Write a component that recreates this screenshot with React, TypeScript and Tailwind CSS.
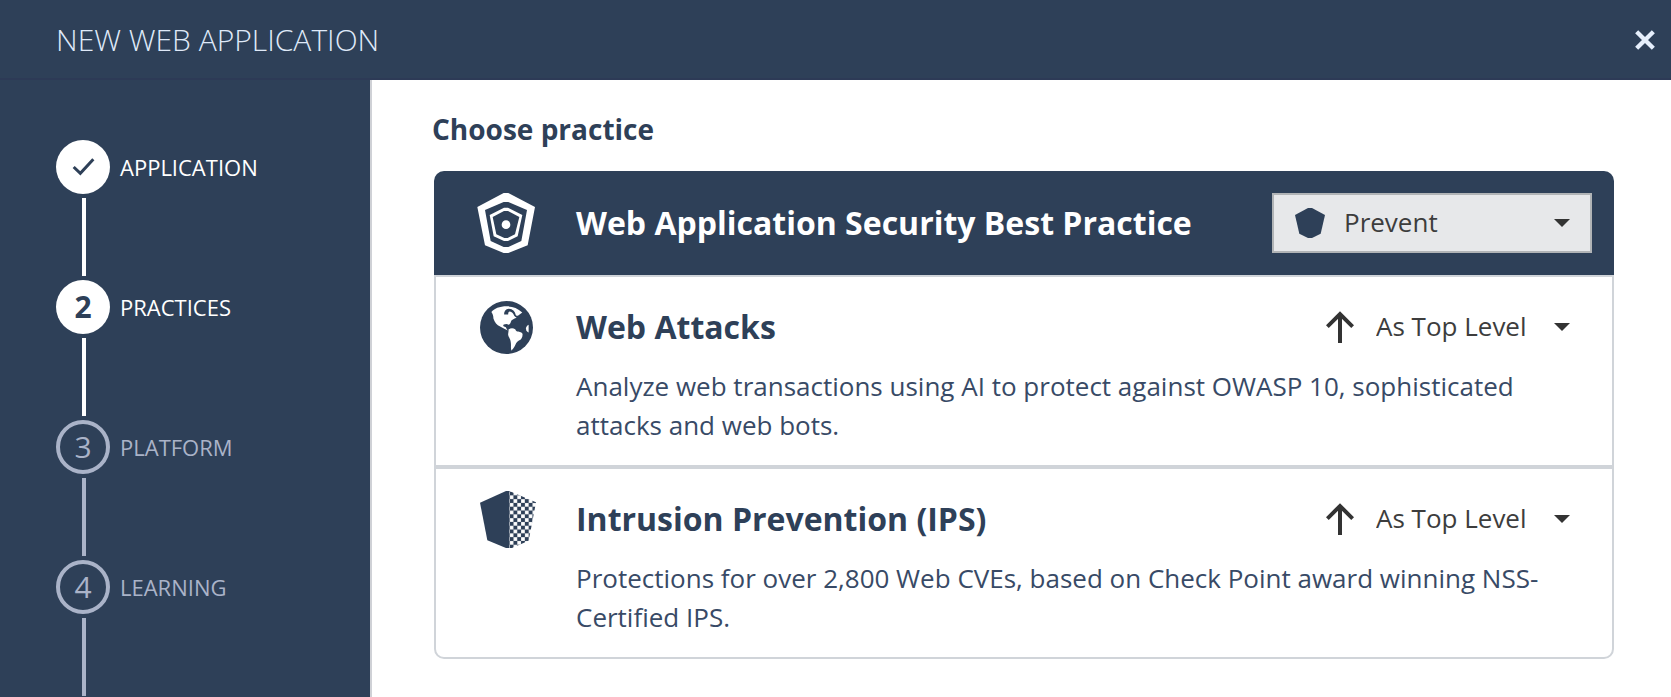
import { useState } from "react";
import type { ReactNode } from "react";

type StepState = "done" | "current" | "upcoming";

const steps: { label: string; state: StepState }[] = [
  { label: "APPLICATION", state: "done" },
  { label: "PRACTICES", state: "current" },
  { label: "PLATFORM", state: "upcoming" },
  { label: "LEARNING", state: "upcoming" },
];

function CheckIcon() {
  return (
    <svg className="h-5 w-6" viewBox="0 0 72 60" fill="none" stroke="currentColor" strokeWidth="9" aria-hidden="true">
      <path d="M8 33 L28 52 L67 10" />
    </svg>
  );
}

function CloseIcon() {
  return (
    <svg className="size-5" viewBox="0 0 60 60" fill="none" stroke="currentColor" strokeWidth="13" aria-hidden="true">
      <path d="M5 5 L55 55 M55 5 L5 55" />
    </svg>
  );
}

function TargetShieldIcon() {
  return (
    <svg className="h-[60px] w-[58px]" viewBox="0 0 174 180" fill="currentColor" aria-hidden="true">
      <path
        fillRule="evenodd"
        d="M80 0 H94 L174 42 L152 157 L94 180 H80 L24 157 L1 42 Z M80 27 L24 51 L41 144 L80 162 H94 L133 144 L150 51 L94 27 Z"
      />
      <path
        fillRule="evenodd"
        d="M81 44 H93 L136 66 L122 130 L93 144 H81 L50 130 L38 66 Z M81 54 L47 72 L58 124 L82 135 H92 L114 124 L127 72 L93 54 Z"
      />
      <circle cx="87" cy="95" r="13" />
    </svg>
  );
}

function GlobeIcon() {
  return (
    <svg className="size-[53px]" viewBox="0 0 158 158" aria-hidden="true">
      <circle cx="79" cy="79" r="79" fill="#2e4058" />
      <path
        fill="#fff"
        d="M34 33 C42 23 58 16 80 16 C98 16 112 21 126 34 L114 43 C111 45 108 45 106 40 C104 31 98 24 86 23 C76 24 72 31 72 40 L84 40 C84 34 85 31 89 31 C95 32 99 36 102 44 C105 47 107 48 109 50 C101 54 94 55 92 62 C91 67 88 70 85 71 C81 67 76 68 71 70 C67 74 70 77 77 78 C79 82 81 86 83 88 C75 84 67 80 60 76 C50 71 44 64 40 52 C40 45 38 39 34 33 Z"
      />
      <path
        fill="#fff"
        d="M85 85 C92 80 98 80 105 84 C107 88 109 91 114 91 C121 93 127 94 127 99 C127 109 123 115 116 118 C108 122 107 128 103 136 C100 142 96 145 94 148 C91 143 93 134 92 125 C91 112 86 109 84 101 C83 96 86 91 85 85 Z"
      />
      <path fill="#fff" d="M145 71 C138 75 135 81 138 87 C140 91 143 93 145 94 Z" />
    </svg>
  );
}

function HalfShieldIcon() {
  return (
    <svg className="h-[57px] w-14" viewBox="0 0 168 171" fill="#2e4058" aria-hidden="true">
      <defs>
        <pattern id="checker" x="89" y="13" width="22.8" height="22.8" patternUnits="userSpaceOnUse">
          <rect width="22.8" height="22.8" fill="#2e4058" />
          <rect x="0.2" y="0.2" width="11" height="11" fill="#fff" />
          <rect x="11.6" y="11.6" width="11" height="11" fill="#fff" />
        </pattern>
      </defs>
      <path d="M89 0 H78 L0 35 L22 148 L78 171 H89 Z" />
      <path d="M88 0 L168 34 L146 149 L96 171 H88 Z" fill="url(#checker)" />
    </svg>
  );
}

function ShieldIcon() {
  return (
    <svg className="size-[30px]" viewBox="0 0 90 90" fill="#2e4058" aria-hidden="true">
      <path d="M39 0 H51 L90 21 L77 77 L51 90 H39 L13 77 L0 21 Z" />
    </svg>
  );
}

function ArrowUpIcon() {
  return (
    <svg className="h-8 w-7" viewBox="0 0 84 96" fill="none" stroke="#333" strokeWidth="12" aria-hidden="true">
      <path d="M42 96 V8 M4 47 L42 9 L80 47" />
    </svg>
  );
}

function ModeSelect({
  label,
  icon,
  value,
  options,
  boxed = false,
}: {
  label: string;
  icon: ReactNode;
  value: string;
  options: string[];
  boxed?: boolean;
}) {
  const [mode, setMode] = useState(value);
  return (
    <div className={boxed ? "relative w-80 shrink-0" : "relative w-72 shrink-0"}>
      <select
        aria-label={label}
        value={mode}
        onChange={(event) => setMode(event.target.value)}
        className={
          boxed
            ? "h-15 w-full appearance-none border-2 border-[#b1b4b6] bg-[#e7e8ea] pr-12 pb-[2px] pl-[70px] text-[26px] text-[#3d3d3d]"
            : "h-15 w-full appearance-none border-2 border-transparent bg-transparent pr-12 pb-[2px] pl-[70px] text-[26px] text-[#3d3d3d]"
        }
      >
        {options.map((option) => (
          <option key={option}>{option}</option>
        ))}
      </select>
      <span className={boxed ? "pointer-events-none absolute inset-y-0 left-[23px] flex items-center" : "pointer-events-none absolute inset-y-0 left-[22px] flex items-center"}>
        {icon}
      </span>
      <span className="pointer-events-none absolute inset-y-0 right-[22px] flex items-center">
        <svg className="h-2 w-4" viewBox="0 0 16 8" fill="#333" aria-hidden="true">
          <path d="M0 0 H16 L8 8 Z" />
        </svg>
      </span>
    </div>
  );
}

function Practice({ icon, title, children }: { icon: ReactNode; title: string; children: ReactNode }) {
  return (
    <section className="border-2 border-[#d0d4d9] py-5 pr-5 last:rounded-b-[10px]">
      <div className="flex items-center">
        <div className="w-[140px] shrink-0 pl-11">{icon}</div>
        <h3 className="flex-1 text-[32px] leading-10 font-bold">{title}</h3>
        <ModeSelect
          label={`${title} mode`}
          icon={<ArrowUpIcon />}
          value="As Top Level"
          options={["As Top Level", "Prevent", "Detect", "Disabled"]}
        />
      </div>
      <p className="mt-[10px] pr-[50px] pl-[140px] text-[26px] leading-[39px] text-[#384a66]">{children}</p>
    </section>
  );
}

export default function App() {
  return (
    <div className="flex h-screen flex-col overflow-hidden bg-white font-['Open_Sans',sans-serif] text-[#2e4058]">
      <header className="flex h-20 shrink-0 items-center justify-between border-b-2 border-[#2d3a56] bg-[#2e4058] pt-[2px] pr-4 pl-14 text-[#dfe9f8]">
        <h1 className="text-[30px] leading-10 font-light">NEW WEB APPLICATION</h1>
        <button type="button" aria-label="Close" className="text-[#e6effc]">
          <CloseIcon />
        </button>
      </header>
      <div className="flex min-h-0 flex-1">
        <nav aria-label="Steps" className="w-[372px] shrink-0 overflow-hidden border-r-2 border-[#cfd1d6] bg-[#2e4058] pt-15 pl-14">
          <ol>
            {steps.map((step, index) => {
              const upcoming = step.state === "upcoming";
              return (
                <li key={step.label} className={upcoming ? "text-[#aab3c8]" : "text-white"}>
                  <a href={`#step-${index + 1}`} className="flex items-center gap-[10px]">
                    <span
                      className={
                        upcoming
                          ? "flex size-[54px] items-center justify-center rounded-full border-4 border-[#aab3c8] pb-[2px] text-[30px]"
                          : "flex size-[54px] items-center justify-center rounded-full bg-white pb-[2px] text-[30px] font-bold text-[#2e4058]"
                      }
                    >
                      {step.state === "done" ? <CheckIcon /> : index + 1}
                    </span>
                    <span className="text-[22px]">{step.label}</span>
                  </a>
                  <div className="my-1 ml-[26px] h-[78px] w-1 bg-current" />
                </li>
              );
            })}
          </ol>
        </nav>
        <main className="min-w-0 flex-1 overflow-hidden pt-[29px] pr-[57px] pl-[60px]">
          <h2 className="text-[28px] leading-10 font-bold">Choose practice</h2>
          <div className="mt-[22px] ml-[2px]">
            <div className="flex h-26 items-center rounded-t-[10px] bg-[#2e4058] pr-[22px] text-white">
              <div className="w-[142px] shrink-0 pl-[43px]">
                <TargetShieldIcon />
              </div>
              <h3 className="flex-1 text-[32px] leading-10 font-bold">Web Application Security Best Practice</h3>
              <ModeSelect
                label="Best practice mode"
                icon={<ShieldIcon />}
                value="Prevent"
                options={["Prevent", "Detect", "Disabled"]}
                boxed
              />
            </div>
            <Practice icon={<GlobeIcon />} title="Web Attacks">
              Analyze web transactions using AI to protect against OWASP 10, sophisticated attacks and web bots.
            </Practice>
            <Practice icon={<HalfShieldIcon />} title="Intrusion Prevention (IPS)">
              Protections for over 2,800 Web CVEs, based on Check Point award winning NSS-Certified IPS.
            </Practice>
          </div>
        </main>
      </div>
    </div>
  );
}
